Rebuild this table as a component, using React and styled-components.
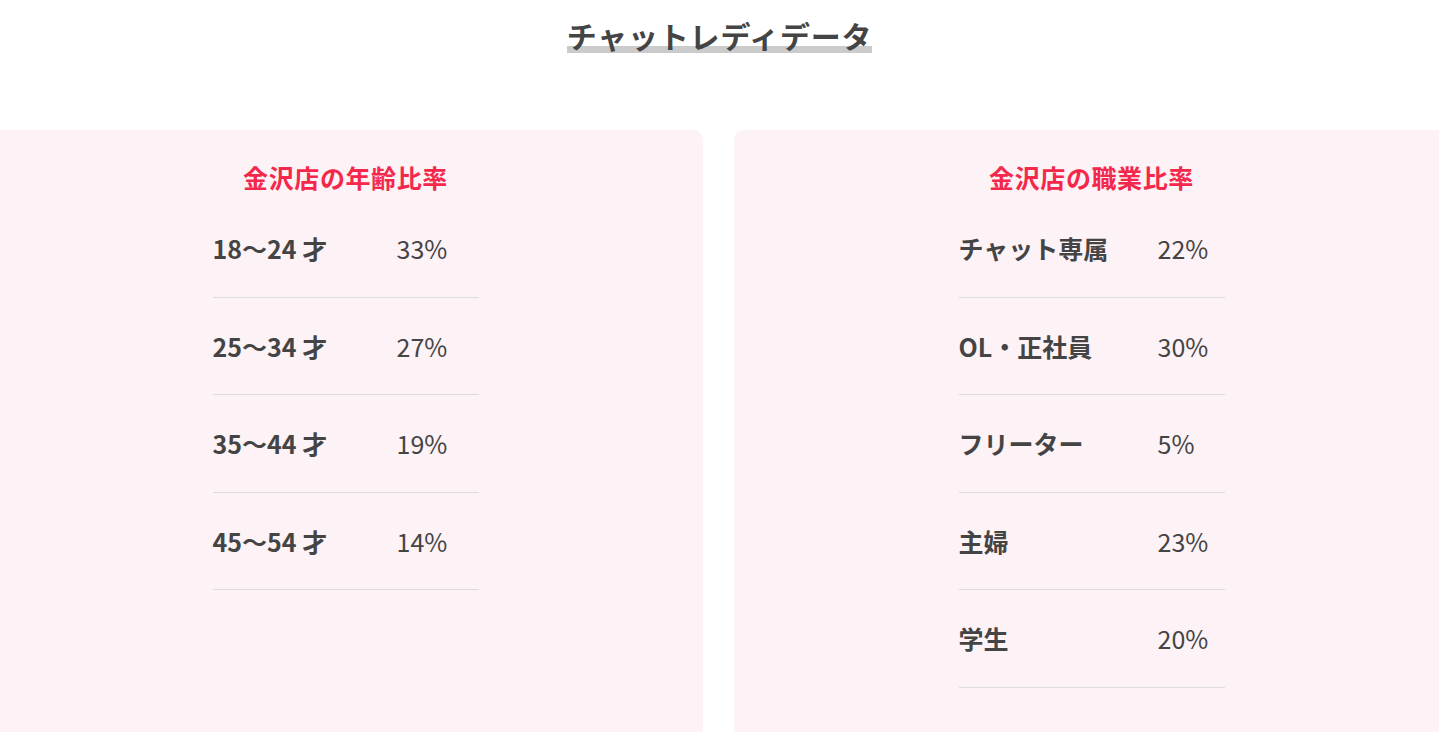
import React from "react";
import styled, { createGlobalStyle } from "styled-components";

const GlobalStyle = createGlobalStyle`
  html, body {
    margin: 0;
    padding: 0;
    background: #fff;
    overflow: hidden;
  }
  body {
    font-family: "Noto Sans CJK JP", "Noto Sans", sans-serif;
    color: #444;
  }
`;

const ageData = [
  { label: "18〜24 才", value: "33%" },
  { label: "25〜34 才", value: "27%" },
  { label: "35〜44 才", value: "19%" },
  { label: "45〜54 才", value: "14%" },
];

const jobData = [
  { label: "チャット専属", value: "22%" },
  { label: "OL・正社員", value: "30%" },
  { label: "フリーター", value: "5%" },
  { label: "主婦", value: "23%" },
  { label: "学生", value: "20%" },
];

export default function App() {
  return (
    <Page>
      <GlobalStyle />
      <Heading>
        <Marker>チャットレディデータ</Marker>
      </Heading>
      <Cards>
        <Card>
          <CardTitle>金沢店の年齢比率</CardTitle>
          <Table>
            {ageData.map((r) => (
              <Row key={r.label} $labelWidth={184}>
                <Label>{r.label}</Label>
                <Value>{r.value}</Value>
              </Row>
            ))}
          </Table>
        </Card>
        <Card>
          <CardTitle>金沢店の職業比率</CardTitle>
          <Table>
            {jobData.map((r) => (
              <Row key={r.label} $labelWidth={199}>
                <Label>{r.label}</Label>
                <Value>{r.value}</Value>
              </Row>
            ))}
          </Table>
        </Card>
      </Cards>
    </Page>
  );
}

const Page = styled.div`
  width: 1439px;
  height: 732px;
  overflow: hidden;
  display: flex;
  flex-direction: column;
  align-items: center;
`;

const Heading = styled.h2`
  margin: 14px 0 0;
  font-size: 30px;
  font-weight: 700;
  line-height: 42px;
  letter-spacing: 0.8px;
  color: #444;
  text-align: center;
`;

const Marker = styled.span`
  display: inline-block;
  line-height: 42px;
  background: linear-gradient(
    transparent 32px,
    #cbcbcb 32px,
    #cbcbcb 39px,
    transparent 39px
  );
`;

const Cards = styled.div`
  margin-top: 74px;
  margin-left: -2px;
  width: 1461px;
  flex-shrink: 0;
  display: grid;
  grid-template-columns: 1fr 1fr;
  gap: 31px;
`;

const Card = styled.section`
  background: #fdf2f6;
  border-radius: 10px;
  padding: 28px 0 60px;
  display: flex;
  flex-direction: column;
  align-items: center;
`;

const CardTitle = styled.h3`
  margin: 0;
  font-size: 25px;
  font-weight: 700;
  line-height: 38px;
  letter-spacing: 0.6px;
  color: #f3284b;
`;

const Table = styled.div`
  width: 266px;
  margin-top: 4px;
`;

const Row = styled.div`
  display: grid;
  grid-template-columns: ${(p) => p.$labelWidth}px 1fr;
  align-items: center;
  height: 97.5px;
  box-sizing: border-box;
  border-bottom: 1px solid #dcdcdc;
  font-size: 25px;
  color: #444;
`;

const Label = styled.div`
  font-weight: 700;
  white-space: nowrap;
`;

const Value = styled.div`
  font-weight: 400;
  white-space: nowrap;
`;
